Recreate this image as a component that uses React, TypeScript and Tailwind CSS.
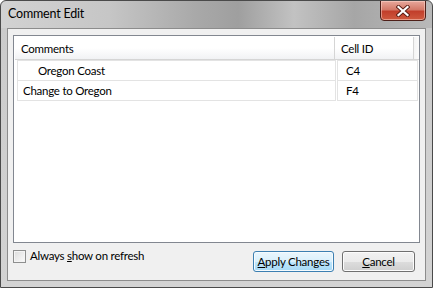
import React from "react"

const rows = [
  { comment: "Oregon Coast", cell: "C4", indent: true },
  { comment: "Change to Oregon", cell: "F4", indent: false },
]

function CloseGlyph() {
  return (
    <svg width="14" height="12" viewBox="0 0 14 12">
      <path d="M2.5 2 L11.5 10 M11.5 2 L2.5 10" stroke="#5a1d14" strokeWidth="4" strokeLinecap="square" />
      <path d="M2.5 2 L11.5 10 M11.5 2 L2.5 10" stroke="#ffffff" strokeWidth="2.2" strokeLinecap="square" />
    </svg>
  )
}

export default function App() {
  return (
    <div
      className="flex h-[288px] w-[433px] flex-col overflow-hidden rounded-t-[6px] border border-[#4a4a4a] bg-[linear-gradient(90deg,#d2d2d2_0%,#c6c6c6_25%,#a9a9a9_45%,#9f9f9f_55%,#c2c2c2_68%,#a6a6a6_82%,#b9b9b9_100%)] text-[11.5px] tracking-[-0.25px] text-black"
      style={{ fontFamily: "Lato, 'Noto Sans', sans-serif" }}
    >
      {/* title bar */}
      <div className="flex h-[27px] shrink-0 items-start justify-between">
        <span className="pl-[7px] pt-[5px] text-[12.5px] leading-[16px] tracking-[-0.2px] text-black">Comment Edit</span>
        <button
          type="button"
          className="mr-[6px] -mt-px flex h-[21px] w-[46px] items-center justify-center rounded-b-[4px] border border-[#4e1f18] bg-[linear-gradient(180deg,#e8a89c_0%,#d47a69_45%,#c23f2b_55%,#cf5a3f_100%)] shadow-[inset_0_0_0_1px_rgba(255,220,210,0.5)]"
        >
          <CloseGlyph />
        </button>
      </div>

      {/* frame + client */}
      <div className="flex flex-1 flex-col bg-[linear-gradient(180deg,#cbcbcb_0%,#d3d3d3_100%)] px-[6px] pb-[6px]">
        <div className="flex flex-1 flex-col border border-[#8c8c8c] bg-[#f0f0f0] pl-[5px] pr-[5px] pt-[6px] pb-[7px]">
          {/* list */}
          <div className="flex h-[208px] flex-col border border-[#828790] bg-white pl-px pt-px">
            <div className="flex h-[23px] shrink-0">
              <div className="flex w-[320px] items-center border-b border-r border-[#d5d5d5] bg-[linear-gradient(180deg,#ffffff_0%,#ffffff_50%,#f1f2f4_100%)] pl-[6px] pt-[2px]">
                Comments
              </div>
              <div className="flex w-[79px] items-center border-b border-r border-[#d5d5d5] bg-[linear-gradient(180deg,#ffffff_0%,#ffffff_50%,#f1f2f4_100%)] pl-[6px] pt-[2px]">
                Cell ID
              </div>
              <div className="flex-1 border-b border-[#d5d5d5] bg-[linear-gradient(90deg,#f4f4f4,#fbfbfb)]" />
            </div>
            <div className="flex flex-col pl-[2px]">
              {rows.map((row, i) => (
                <div key={row.cell} className={`flex h-[21px] gap-px ${i > 0 ? "-mt-px" : ""}`}>
                  <div
                    className={`flex w-[319px] items-center border border-[#e3e3e3] pt-px ${row.indent ? "pl-[20px]" : "pl-[5px]"}`}
                  >
                    {row.comment}
                  </div>
                  <div className="flex w-[81px] items-center border border-[#e3e3e3] pl-[8px] pt-px">{row.cell}</div>
                </div>
              ))}
            </div>
          </div>

          {/* bottom row */}
          <div className="flex flex-1 items-start justify-between pt-[6px]">
            <label className="flex items-center gap-[4px]">
              <span className="h-[13px] w-[13px] border border-[#8e8f8f] bg-[linear-gradient(135deg,#dcdcdc,#fbfbfb)] shadow-[inset_0_0_0_1px_#f4f4f4]" />
              <span className="leading-[14px]">
                Always <u>s</u>how on refresh
              </span>
            </label>
            <div className="mt-[2px] flex gap-[8px] pr-[5px]">
              <button
                type="button"
                className="h-[21px] w-[81px] rounded-[3px] border border-[#3c7fb1] bg-[linear-gradient(180deg,#eaf6fd_0%,#d9f0fc_50%,#bee6fd_51%,#a7d9f5_100%)] leading-[18px] shadow-[inset_0_0_0_1px_#f5fbfe]"
              >
                <u>A</u>pply Changes
              </button>
              <button
                type="button"
                className="h-[21px] w-[73px] rounded-[3px] border border-[#707070] bg-[linear-gradient(180deg,#f2f2f2_0%,#ebebeb_50%,#dddddd_51%,#cfcfcf_100%)] leading-[18px] shadow-[inset_0_0_0_1px_#fcfcfc]"
              >
                <u>C</u>ancel
              </button>
            </div>
          </div>
        </div>
      </div>
    </div>
  )
}
